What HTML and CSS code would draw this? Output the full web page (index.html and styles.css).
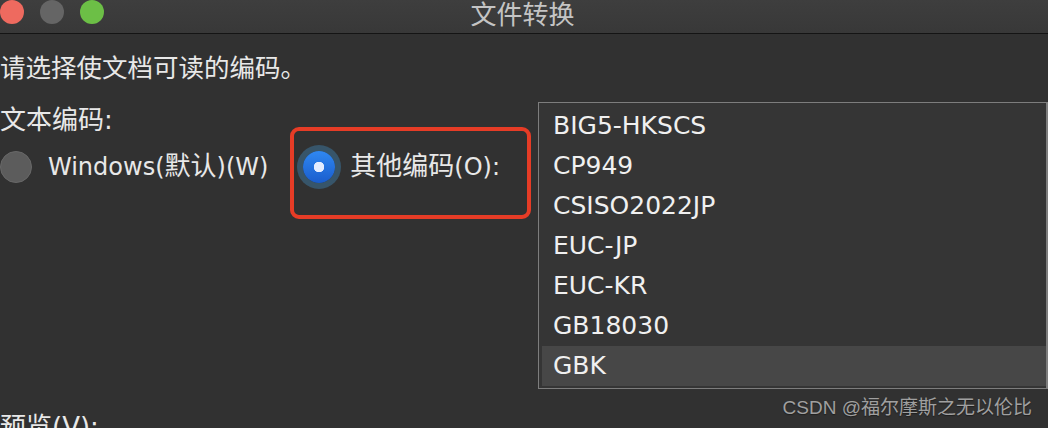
FILE: index.html
```html
<!DOCTYPE html>
<html>
<head>
    <link rel="stylesheet" href="styles.css">
</head>
<body>
    <div class="window">
        <div class="titlebar">
            <div class="lights">
                <span class="light close"></span>
                <span class="light minimize"></span>
                <span class="light zoom"></span>
            </div>
            <div class="title">文件转换</div>
            <div></div>
        </div>

        <div class="content">
            <p class="prompt">请选择使文档可读的编码。</p>

            <div class="encoding">
                <div class="choices">
                    <div class="label">文本编码:</div>
                    <div class="radio-row">
                        <label class="option">
                            <span class="radio"></span>
                            <span class="option-text">Windows(<span class="cjk">默认</span>)(W)</span>
                        </label>
                        <label class="option other">
                            <span class="radio checked"></span>
                            <span class="option-text"><span class="cjk">其他编码</span>(O):</span>
                            <span class="mark-box"></span>
                        </label>
                    </div>
                </div>

                <ul class="charset-list">
                    <li>BIG5-HKSCS</li>
                    <li>CP949</li>
                    <li>CSISO2022JP</li>
                    <li>EUC-JP</li>
                    <li>EUC-KR</li>
                    <li>GB18030</li>
                    <li class="selected">GBK</li>
                </ul>
            </div>

            <div class="label preview">预览(V):</div>
        </div>

        <div class="watermark">CSDN @福尔摩斯之无以伦比</div>
    </div>
</body>
</html>
```

FILE: styles.css
```css
body {
    margin: 0;
    background: #313131;
    font-family: "DejaVu Sans", "Noto Sans CJK SC", sans-serif;
    color: #e8e8e8;
    overflow: hidden;
}

.window {
    position: relative;
    height: 428px;
}

.titlebar {
    height: 33px;
    border-bottom: 1px solid #141414;
    background: linear-gradient(#3e3e3e, #383838);
    display: grid;
    grid-template-columns: 1fr auto 1fr;
}

.lights {
    display: flex;
    gap: 16px;
}

.light {
    width: 24px;
    height: 24px;
    border-radius: 50%;
}

.light.close { background: #ee6a5f; }
.light.minimize { background: #656565; }
.light.zoom { background: #6cbf46; }

.title {
    font-family: "Noto Sans CJK SC", sans-serif;
    font-size: 26px;
    line-height: 25px;
    color: #c4c4c4;
    margin-left: -3px;
}

.content {
    font-size: 24px;
}

.cjk {
    font-family: "Noto Sans CJK SC", sans-serif;
    font-size: 26px;
}

.prompt {
    margin: 19px 0 0;
    line-height: 30px;
    font-size: 25.5px;
}

.encoding {
    display: flex;
    margin-top: 19px;
}

.choices {
    flex: 0 0 538px;
    padding-top: 3px;
}

.label {
    line-height: 30px;
    font-size: 26px;
}

.radio-row {
    display: flex;
    align-items: center;
    gap: 35px;
    margin-top: 10px;
    height: 44px;
}

.option {
    position: relative;
    display: flex;
    align-items: center;
    gap: 15px;
}

.option:first-child {
    gap: 16px;
}

.option-text {
    line-height: 28px;
    margin-top: -3px;
}

.radio {
    width: 32px;
    height: 32px;
    box-sizing: border-box;
    border-radius: 50%;
    background: #5c5c5c;
    border: 1px solid #686868;
}

.radio.checked {
    border: none;
    background: radial-gradient(circle, #e4edff 0 5px, transparent 5.5px),
                linear-gradient(#2f88f2, #1a5dcd);
    box-shadow: 0 0 0 6px rgba(58, 104, 136, 0.65);
}

.mark-box {
    position: absolute;
    left: -13px;
    top: -24px;
    width: 241px;
    height: 92px;
    box-sizing: border-box;
    border: 4px solid #e63c26;
    border-radius: 9px;
}

.charset-list {
    flex: 0 0 510px;
    box-sizing: border-box;
    list-style: none;
    margin: 0;
    padding: 3px 0 0 3px;
    height: 287px;
    border: 1px solid #7d7d7d;
    border-right-width: 2px;
    background: #353535;
    font-size: 25px;
}

.charset-list li {
    height: 40px;
    line-height: 40px;
    padding-left: 11px;
    color: #f0f0f0;
}

.charset-list li.selected {
    background: #474747;
}

.preview {
    margin-top: 23px;
}

.watermark {
    position: absolute;
    right: 16px;
    top: 396px;
    font-family: "Liberation Sans", "Noto Sans CJK SC", sans-serif;
    font-size: 19px;
    line-height: 24px;
    color: #a0a0a0;
    text-shadow: 0 1px 1px #1e1e1e;
}
```
